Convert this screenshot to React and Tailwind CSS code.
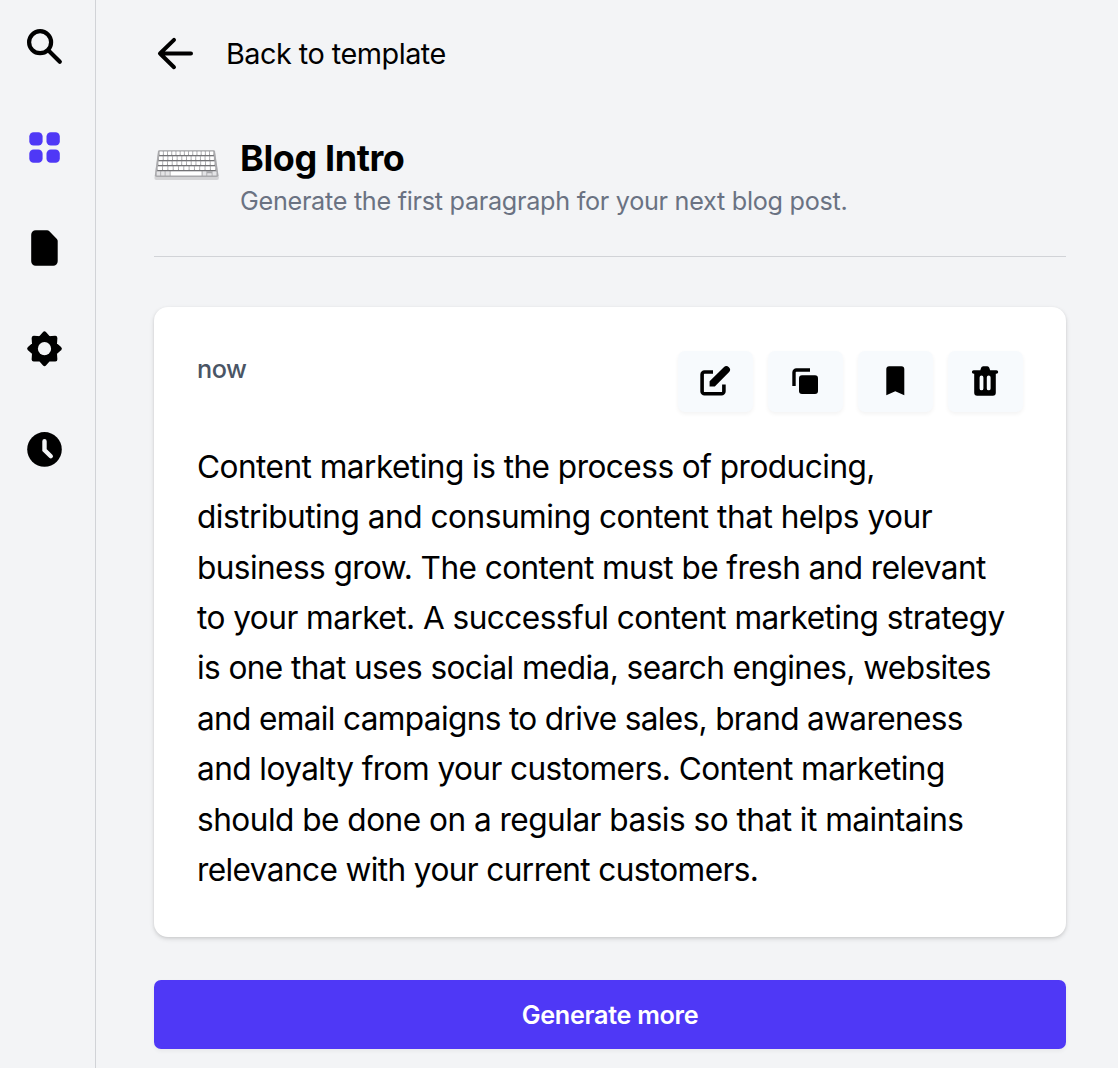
const gearPoints = Array.from({ length: 16 }, (_, i) => {
  const angle = (i * Math.PI) / 8;
  const radius = i % 2 === 1 ? 11.1 : 15.1;
  return `${20.5 + radius * Math.sin(angle)},${20.7 - radius * Math.cos(angle)}`;
}).join(" ");

const sidebarIcons = [
  {
    label: "Search",
    art: (
      <g fill="none" stroke="black" strokeWidth="4.2" strokeLinecap="round">
        <circle cx="16.1" cy="14.2" r="11" />
        <path d="M24.5 22.6 35.8 33.7" />
      </g>
    ),
  },
  {
    label: "Templates",
    art: (
      <g fill="#4f38f6">
        <rect x="5.3" y="4.3" width="13.3" height="13.2" rx="4.3" />
        <rect x="22.5" y="4.3" width="13.3" height="13.2" rx="4.3" />
        <rect x="5.3" y="21.5" width="13.3" height="13.2" rx="4.3" />
        <rect x="22.5" y="21.5" width="13.3" height="13.2" rx="4.3" />
      </g>
    ),
  },
  {
    label: "Documents",
    art: (
      <path d="M11.7 2.2h11.4q1.2 0 2 .8l7.8 8q.8.8.8 2v20.2a4.500 4.500 0 0 1-4.500 4.500H11.700a4.500 4.500 0 0 1-4.500-4.500V6.700a4.500 4.500 0 0 1 4.500-4.500Z" />
    ),
  },
  {
    label: "Settings",
    art: (
      <g>
        <polygon points={gearPoints} stroke="black" strokeWidth="4.4" strokeLinejoin="round" />
        <circle cx="20.5" cy="20.7" r="6.6" fill="#f3f4f6" />
      </g>
    ),
  },
  {
    label: "History",
    art: (
      <g>
        <circle cx="20.5" cy="21.4" r="17.3" />
        <path d="M20.5 13.2v8.8l6.3 6.2" fill="none" stroke="#f3f4f6" strokeWidth="4.4" strokeLinecap="round" />
      </g>
    ),
  },
];

const actions = [
  {
    label: "Edit",
    art: (
      <g>
        <path d="M14 7H5.5A2.4 2.4 0 0 0 3.1 9.4v17a2.4 2.4 0 0 0 2.4 2.4h17a2.4 2.4 0 0 0 2.4-2.4v-6.9" fill="none" stroke="black" strokeWidth="3.6" />
        <path d="M10.6 16.3 24.8 2.2a3.6 3.6 0 0 1 5.1 5.1L15.8 21.5h-5.2Z" />
      </g>
    ),
  },
  {
    label: "Copy",
    art: (
      <g>
        <path d="M21 5H7.4A2.4 2.4 0 0 0 5 7.4V21" fill="none" stroke="black" strokeWidth="3.4" />
        <rect x="10" y="10.2" width="19" height="18.8" rx="3" />
      </g>
    ),
  },
  {
    label: "Bookmark",
    art: <path d="M10.200 1.200h12.200a2.900 2.900 0 0 1 2.900 2.900v26.200L16.300 26.200l-9 4.100V4.100a2.900 2.900 0 0 1 2.900-2.900Z" />,
  },
  {
    label: "Delete",
    art: (
      <path
        fillRule="evenodd"
        transform="translate(.3 .2)"
        d="M13.9 1h4.100q1.600 0 2 1.600l.8 2.400h6.300a1.800 1.800 0 0 1 0 3.600h-.6v19a3 3 0 0 1-3 3H7.900a3 3 0 0 1-3-3v-19h-.5a1.800 1.800 0 0 1 0-3.600h6.600l.8-2.400q.5-1.600 2.100-1.600ZM12.200 10.300a1.900 1.900 0 0 0-1.900 1.900v11a1.900 1.900 0 0 0 3.800 0v-11a1.900 1.900 0 0 0-1.900-1.900Zm7.200 0a1.900 1.900 0 0 0-1.900 1.900v11a1.900 1.900 0 0 0 3.800 0v-11a1.900 1.900 0 0 0-1.900-1.900Z"
      />
    ),
  },
];

const lines = [
  { text: "Content marketing is the process of producing,", spacing: "tracking-[-0.54px]" },
  { text: "distributing and consuming content that helps your", spacing: "tracking-[-0.48px]" },
  { text: "business grow. The content must be fresh and relevant", spacing: "tracking-[-0.58px]" },
  { text: "to your market. A successful content marketing strategy", spacing: "tracking-[-0.54px]" },
  { text: "is one that uses social media, search engines, websites", spacing: "tracking-[-0.59px]" },
  { text: "and email campaigns to drive sales, brand awareness", spacing: "tracking-[-0.66px]" },
  { text: "and loyalty from your customers. Content marketing", spacing: "tracking-[-0.58px]" },
  { text: "should be done on a regular basis so that it maintains", spacing: "tracking-[-0.52px]" },
  { text: "relevance with your current customers.", spacing: "tracking-[-0.61px]" },
];

const keyRows = [
  { y: 2.4, left: 5.2, right: 59.8, count: 13 },
  { y: 7.4, left: 4.6, right: 60.4, count: 12 },
  { y: 12.4, left: 4, right: 61, count: 12 },
  { y: 17.4, left: 3.3, right: 61.7, count: 11 },
];

function Keyboard() {
  return (
    <svg width="66" height="34" viewBox="0 0 66 34" className="shrink-0">
      <path d="M5.500 1.200h54q1.200 0 1.500 1.200l3.900 26q.2 2.500-2 2.500H2.500Q.2 30.900.5 28.400L4 2.400q.3-1.200 1.500-1.200Z" fill="#d3d3d5" />
      <path d="M5.500 1.200h54q1.200 0 1.500 1.200l3.400 23.800q.2 1.700-2 1.700H2.900q-2.200 0-2-1.700L4 2.400q.3-1.200 1.500-1.200Z" fill="#a9a9ac" />
      {keyRows.map((row) => (
        <path key={row.y} d={`M${row.left} ${row.y + 4}H${row.right}`} stroke="#737376" strokeWidth="1.2" />
      ))}
      {keyRows.map((row) => {
        const step = (row.right - row.left) / row.count;
        return Array.from({ length: row.count }, (_, i) => (
          <rect key={`${row.y}-${i}`} x={row.left + i * step + 0.4} y={row.y} width={step - 0.9} height="3.5" rx="0.5" fill="#ffffff" />
        ));
      })}
      <g fill="#e4e4e6">
        <rect x="2.7" y="22.4" width="3.6" height="4.2" rx=".5" />
        <rect x="7.1" y="22.4" width="3.6" height="4.2" rx=".5" />
        <rect x="11.5" y="22.4" width="4.2" height="4.2" rx=".5" />
        <rect x="16.6" y="22.4" width="31" height="4" rx=".5" fill="#ffffff" />
        <rect x="48.6" y="22.4" width="3.8" height="4.2" rx=".5" />
        <rect x="53.2" y="24.3" width="4.5" height="2.2" rx=".5" />
        <rect x="58.5" y="22.4" width="4" height="4.2" rx=".5" />
      </g>
    </svg>
  );
}

export default function App() {
  return (
    <div className="flex h-[1068px] w-[1118px] overflow-hidden bg-gray-100 font-['Inter',sans-serif] text-black">
      <nav className="flex w-24 shrink-0 flex-col gap-[60px] border-r border-[#d1d3d7] pl-6 pt-7">
        {sidebarIcons.map((icon) => (
          <button key={icon.label} aria-label={icon.label} className="size-10">
            <svg width="40" height="40" viewBox="0 0 40 40" className="overflow-visible">{icon.art}</svg>
          </button>
        ))}
      </nav>
      <main className="flex w-[970px] flex-col pl-[58px]">
        <a className="mt-8 flex h-11 items-center">
          <svg width="40" height="34" viewBox="0 0 40 34" fill="none" stroke="black" strokeWidth="4" strokeLinecap="round" strokeLinejoin="round">
            <path d="M20 2.900 6 16.500 20 30.200M6 16.500h31" />
          </svg>
          <span className="ml-8 whitespace-nowrap text-[28.8px] tracking-[-0.5px]">Back to template</span>
        </a>
        <header className="mt-[60px] flex h-[121px] border-b border-[#d1d3d7]">
          <div className="mt-[13px]"><Keyboard /></div>
          <div className="ml-5">
            <h1 className="whitespace-nowrap text-[36px] font-bold leading-[44px] tracking-[-0.4px]">Blog Intro</h1>
            <p className="whitespace-nowrap text-[25.2px] leading-[42px] tracking-[-0.28px] text-gray-500">Generate the first paragraph for your next blog post.</p>
          </div>
        </header>
        <section className="mt-[50px] h-[630px] rounded-[14px] bg-white px-[43px] pt-11 shadow-[0_2px_5px_rgba(0,0,0,0.12),0_1px_3px_rgba(0,0,0,0.08)]">
          <div className="flex h-[62px] justify-between">
            <span className="text-[25.2px] font-medium leading-9 tracking-[-0.5px] text-gray-600">now</span>
            <div className="flex gap-[15px]">
              {actions.map((action) => (
                <button key={action.label} aria-label={action.label} className="flex h-[61px] w-[75px] items-center justify-center rounded-[7px] bg-[#f7fafd] pt-px shadow-[0_2px_4px_rgba(0,0,0,0.05)]">
                  <svg width="34" height="34" viewBox="0 0 34 34">{action.art}</svg>
                </button>
              ))}
            </div>
          </div>
          <p className="mt-[28.7px] text-[31.6px] leading-[50.4px]">
            {lines.map((line) => (
              <span key={line.text} className={`block whitespace-nowrap ${line.spacing}`}>{line.text}</span>
            ))}
          </p>
        </section>
        <button className="mt-[43px] h-[69px] shrink-0 rounded-[7px] bg-[#4f38f6] pt-0.5 text-[25.2px] font-semibold tracking-[-0.3px] text-white shadow-[0_2px_4px_rgba(0,0,0,0.05)]">Generate more</button>
      </main>
    </div>
  );
}
